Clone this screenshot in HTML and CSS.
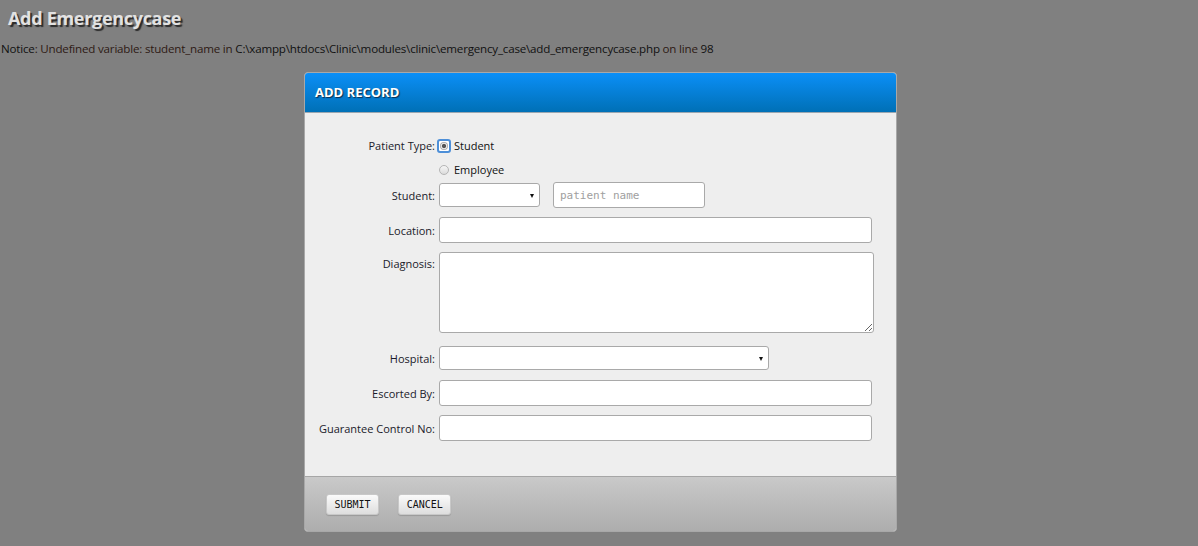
FILE: index.html
```html
<!DOCTYPE html>
<html>
<head>
<meta charset="utf-8">
<link rel="stylesheet" href="styles.css">
</head>
<body>
<h1 class="page-title">Add Emergencycase</h1>
<div class="notice"><b>Notice</b>: Undefined variable: student_name in <b>C:\xampp\htdocs\Clinic\modules\clinic\emergency_case\add_emergencycase.php</b> on line <b>98</b></div>
<div class="dialog">
  <div class="dialog-head">ADD RECORD</div>
  <form class="dialog-body">
    <div class="row row-type">
      <label class="lbl">Patient Type:</label>
      <div class="field radios">
        <label class="radio"><span class="dot checked"></span>Student</label>
        <label class="radio"><span class="dot"></span>Employee</label>
      </div>
    </div>
    <div class="row row-student">
      <label class="lbl">Student:</label>
      <div class="field inline">
        <span class="select small"><span class="caret"></span></span>
        <input class="text name" type="text" placeholder="patient name">
      </div>
    </div>
    <div class="row row-loc">
      <label class="lbl">Location:</label>
      <div class="field"><input class="text wide" type="text"></div>
    </div>
    <div class="row row-diag">
      <label class="lbl top">Diagnosis:</label>
      <div class="field"><textarea class="area"></textarea></div>
    </div>
    <div class="row row-hosp">
      <label class="lbl">Hospital:</label>
      <div class="field"><span class="select hosp"><span class="caret"></span></span></div>
    </div>
    <div class="row row-esc">
      <label class="lbl">Escorted By:</label>
      <div class="field"><input class="text wide" type="text"></div>
    </div>
    <div class="row row-last">
      <label class="lbl">Guarantee Control No:</label>
      <div class="field"><input class="text wide" type="text"></div>
    </div>
  </form>
  <div class="dialog-foot">
    <button class="btn" type="button">SUBMIT</button>
    <button class="btn" type="button">CANCEL</button>
  </div>
</div>
</body>
</html>
```
FILE: styles.css
```css
html, body {
  margin: 0;
  padding: 0;
  background: #808080;
  font-family: "Open Sans", "Noto Sans", sans-serif;
  font-size: 12px;
  color: #111;
}
.page-title {
  margin: 0;
  padding: 6px 0 0 8px;
  font-size: 18px;
  line-height: 24px;
  font-weight: bold;
  color: #e2e2e2;
  letter-spacing: -0.3px;
  text-shadow: 2px 2px 1px #2a2a2a;
}
.notice {
  padding: 11px 0 0 1px;
  line-height: 16px;
  font-size: 11.6px;
  color: #2e1a14;
  letter-spacing: -0.2px;
}
.notice b {
  font-weight: normal;
  color: #111;
}
.dialog {
  width: 591px;
  margin: 15px 0 0 calc(50% - 295px);
  border: 1px solid #a8a8a8;
  border-radius: 4px;
  overflow: hidden;
  background: #eeeeee;
}
.dialog-head {
  height: 39px;
  line-height: 38px;
  padding-left: 10px;
  background: linear-gradient(#0b8ff7, #0070b6);
  border-bottom: 1px solid #9aa6b0;
  color: #fff;
  font-weight: bold;
  font-size: 13px;
  text-shadow: 1px 1px 1px #0a3050;
}
.dialog-body {
  margin: 0;
  padding: 24px 0 35px;
  border-bottom: 1px solid #a6a6a6;
}
.row {
  display: grid;
  grid-template-columns: 130px 1fr;
  column-gap: 4px;
  align-items: center;
  margin-bottom: 10px;
}
.lbl {
  text-align: right;
  color: #1a1a2a;
  font-size: 11px;
  white-space: nowrap;
}
.lbl.top { align-self: start; padding-top: 4px; }
.row-type { align-items: start; margin-bottom: 3px; }
.row-type .lbl { line-height: 18px; }
.radios { display: flex; flex-direction: column; gap: 6px; }
.radio {
  display: flex;
  align-items: center;
  gap: 5px;
  font-size: 11px;
  line-height: 18px;
  color: #111;
}
.dot {
  box-sizing: border-box;
  width: 10px;
  height: 10px;
  border-radius: 50%;
  border: 1px solid #b5b5b5;
  background: linear-gradient(#f6f6f6, #dcdcdc);
}
.dot.checked {
  position: relative;
  outline: 2px solid #4d8fd8;
  outline-offset: 0;
  border-radius: 1px;
  border-color: #fff;
  background: #fff;
}
.dot.checked::after {
  content: "";
  position: absolute;
  left: 0;
  top: 0;
  width: 8px;
  height: 8px;
  border-radius: 50%;
  background: radial-gradient(circle, #555 0 1.8px, #e4e4e4 2.4px 3px, #aaa 3.6px);
}
.inline { display: flex; align-items: center; gap: 13px; }
.text, .select, .area {
  box-sizing: border-box;
  border: 1px solid #a9a9a9;
  border-radius: 3px;
  background: #fff;
  display: block;
}
.text {
  height: 26px;
  padding: 0 6px;
  font-family: "DejaVu Sans Mono", monospace;
  font-size: 11px;
  outline: none;
}
.text::placeholder { color: #a0a0a0; }
.wide { width: 433px; height: 26px; }
.name { width: 152px; }
.select {
  position: relative;
  height: 24px;
}
.select.small { width: 101px; }
.select.hosp { width: 330px; }
.caret {
  position: absolute;
  right: 5px;
  top: 10px;
  width: 0;
  height: 0;
  border-left: 2.5px solid transparent;
  border-right: 2.5px solid transparent;
  border-top: 4px solid #111;
}
.area {
  width: 435px;
  height: 81px;
  resize: both;
  font-family: "DejaVu Sans Mono", monospace;
}
.row-student { margin-bottom: 9px; }
.row-loc { margin-bottom: 9px; }
.row-diag { margin-bottom: 13px; }
.row-hosp { margin-bottom: 10px; }
.row-esc { margin-bottom: 9px; }
.row-last { margin-bottom: 0; }
.dialog-foot {
  height: 54px;
  display: flex;
  align-items: center;
  gap: 19px;
  padding-left: 21px;
  background: linear-gradient(#c9c9c9, #adadad);
}
.btn {
  height: 21px;
  padding: 0 7.5px;
  border: 1px solid #c8c8c8;
  border-radius: 3px;
  background: linear-gradient(#fafafa, #dedede);
  font-family: "DejaVu Sans Mono", monospace;
  font-size: 10px;
  color: #111;
  box-shadow: 0 1px 1px rgba(0,0,0,0.15);
}
```
